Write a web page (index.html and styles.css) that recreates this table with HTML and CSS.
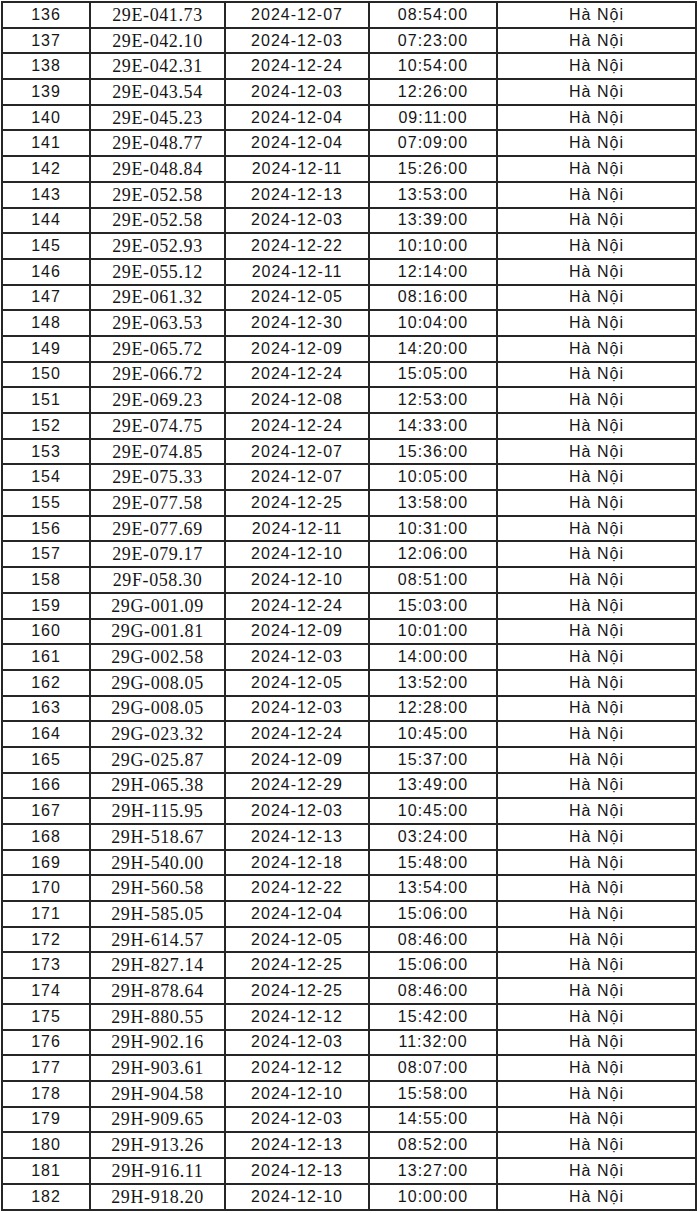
FILE: index.html
```html
<!DOCTYPE html>
<html lang="vi">
<head>
<meta charset="utf-8">
<title>Danh sách</title>
<link rel="stylesheet" href="styles.css">
</head>
<body>
<table class="list">
<colgroup><col class="c-no"><col class="c-plate"><col class="c-date"><col class="c-time"><col class="c-city"></colgroup>
<tbody>
<tr><td>136</td><td class="plate">29E-041.73</td><td>2024-12-07</td><td>08:54:00</td><td>Hà Nội</td></tr>
<tr><td>137</td><td class="plate">29E-042.10</td><td>2024-12-03</td><td>07:23:00</td><td>Hà Nội</td></tr>
<tr><td>138</td><td class="plate">29E-042.31</td><td>2024-12-24</td><td>10:54:00</td><td>Hà Nội</td></tr>
<tr><td>139</td><td class="plate">29E-043.54</td><td>2024-12-03</td><td>12:26:00</td><td>Hà Nội</td></tr>
<tr><td>140</td><td class="plate">29E-045.23</td><td>2024-12-04</td><td>09:11:00</td><td>Hà Nội</td></tr>
<tr><td>141</td><td class="plate">29E-048.77</td><td>2024-12-04</td><td>07:09:00</td><td>Hà Nội</td></tr>
<tr><td>142</td><td class="plate">29E-048.84</td><td>2024-12-11</td><td>15:26:00</td><td>Hà Nội</td></tr>
<tr><td>143</td><td class="plate">29E-052.58</td><td>2024-12-13</td><td>13:53:00</td><td>Hà Nội</td></tr>
<tr><td>144</td><td class="plate">29E-052.58</td><td>2024-12-03</td><td>13:39:00</td><td>Hà Nội</td></tr>
<tr><td>145</td><td class="plate">29E-052.93</td><td>2024-12-22</td><td>10:10:00</td><td>Hà Nội</td></tr>
<tr><td>146</td><td class="plate">29E-055.12</td><td>2024-12-11</td><td>12:14:00</td><td>Hà Nội</td></tr>
<tr><td>147</td><td class="plate">29E-061.32</td><td>2024-12-05</td><td>08:16:00</td><td>Hà Nội</td></tr>
<tr><td>148</td><td class="plate">29E-063.53</td><td>2024-12-30</td><td>10:04:00</td><td>Hà Nội</td></tr>
<tr><td>149</td><td class="plate">29E-065.72</td><td>2024-12-09</td><td>14:20:00</td><td>Hà Nội</td></tr>
<tr><td>150</td><td class="plate">29E-066.72</td><td>2024-12-24</td><td>15:05:00</td><td>Hà Nội</td></tr>
<tr><td>151</td><td class="plate">29E-069.23</td><td>2024-12-08</td><td>12:53:00</td><td>Hà Nội</td></tr>
<tr><td>152</td><td class="plate">29E-074.75</td><td>2024-12-24</td><td>14:33:00</td><td>Hà Nội</td></tr>
<tr><td>153</td><td class="plate">29E-074.85</td><td>2024-12-07</td><td>15:36:00</td><td>Hà Nội</td></tr>
<tr><td>154</td><td class="plate">29E-075.33</td><td>2024-12-07</td><td>10:05:00</td><td>Hà Nội</td></tr>
<tr><td>155</td><td class="plate">29E-077.58</td><td>2024-12-25</td><td>13:58:00</td><td>Hà Nội</td></tr>
<tr><td>156</td><td class="plate">29E-077.69</td><td>2024-12-11</td><td>10:31:00</td><td>Hà Nội</td></tr>
<tr><td>157</td><td class="plate">29E-079.17</td><td>2024-12-10</td><td>12:06:00</td><td>Hà Nội</td></tr>
<tr><td>158</td><td class="plate">29F-058.30</td><td>2024-12-10</td><td>08:51:00</td><td>Hà Nội</td></tr>
<tr><td>159</td><td class="plate">29G-001.09</td><td>2024-12-24</td><td>15:03:00</td><td>Hà Nội</td></tr>
<tr><td>160</td><td class="plate">29G-001.81</td><td>2024-12-09</td><td>10:01:00</td><td>Hà Nội</td></tr>
<tr><td>161</td><td class="plate">29G-002.58</td><td>2024-12-03</td><td>14:00:00</td><td>Hà Nội</td></tr>
<tr><td>162</td><td class="plate">29G-008.05</td><td>2024-12-05</td><td>13:52:00</td><td>Hà Nội</td></tr>
<tr><td>163</td><td class="plate">29G-008.05</td><td>2024-12-03</td><td>12:28:00</td><td>Hà Nội</td></tr>
<tr><td>164</td><td class="plate">29G-023.32</td><td>2024-12-24</td><td>10:45:00</td><td>Hà Nội</td></tr>
<tr><td>165</td><td class="plate">29G-025.87</td><td>2024-12-09</td><td>15:37:00</td><td>Hà Nội</td></tr>
<tr><td>166</td><td class="plate">29H-065.38</td><td>2024-12-29</td><td>13:49:00</td><td>Hà Nội</td></tr>
<tr><td>167</td><td class="plate">29H-115.95</td><td>2024-12-03</td><td>10:45:00</td><td>Hà Nội</td></tr>
<tr><td>168</td><td class="plate">29H-518.67</td><td>2024-12-13</td><td>03:24:00</td><td>Hà Nội</td></tr>
<tr><td>169</td><td class="plate">29H-540.00</td><td>2024-12-18</td><td>15:48:00</td><td>Hà Nội</td></tr>
<tr><td>170</td><td class="plate">29H-560.58</td><td>2024-12-22</td><td>13:54:00</td><td>Hà Nội</td></tr>
<tr><td>171</td><td class="plate">29H-585.05</td><td>2024-12-04</td><td>15:06:00</td><td>Hà Nội</td></tr>
<tr><td>172</td><td class="plate">29H-614.57</td><td>2024-12-05</td><td>08:46:00</td><td>Hà Nội</td></tr>
<tr><td>173</td><td class="plate">29H-827.14</td><td>2024-12-25</td><td>15:06:00</td><td>Hà Nội</td></tr>
<tr><td>174</td><td class="plate">29H-878.64</td><td>2024-12-25</td><td>08:46:00</td><td>Hà Nội</td></tr>
<tr><td>175</td><td class="plate">29H-880.55</td><td>2024-12-12</td><td>15:42:00</td><td>Hà Nội</td></tr>
<tr><td>176</td><td class="plate">29H-902.16</td><td>2024-12-03</td><td>11:32:00</td><td>Hà Nội</td></tr>
<tr><td>177</td><td class="plate">29H-903.61</td><td>2024-12-12</td><td>08:07:00</td><td>Hà Nội</td></tr>
<tr><td>178</td><td class="plate">29H-904.58</td><td>2024-12-10</td><td>15:58:00</td><td>Hà Nội</td></tr>
<tr><td>179</td><td class="plate">29H-909.65</td><td>2024-12-03</td><td>14:55:00</td><td>Hà Nội</td></tr>
<tr><td>180</td><td class="plate">29H-913.26</td><td>2024-12-13</td><td>08:52:00</td><td>Hà Nội</td></tr>
<tr><td>181</td><td class="plate">29H-916.11</td><td>2024-12-13</td><td>13:27:00</td><td>Hà Nội</td></tr>
<tr><td>182</td><td class="plate">29H-918.20</td><td>2024-12-10</td><td>10:00:00</td><td>Hà Nội</td></tr>
</tbody>
</table>
</body>
</html>
```
FILE: styles.css
```css
html, body {
  margin: 0;
  padding: 0;
  background: #ffffff;
}

body {
  padding: 1px 0 0 1px;
}

.list {
  width: 696px;
  height: 1210px;
  table-layout: fixed;
  border-collapse: separate;
  border-spacing: 2px;
  background: #262626;
  font-family: "Liberation Sans", Arial, sans-serif;
  font-size: 16px;
  color: #161616;
}

.c-no { width: 86px; }
.c-plate { width: 133px; }
.c-date { width: 142px; }
.c-time { width: 126px; }
.c-city { width: 197px; }

.list td {
  background: #ffffff;
  padding: 0;
  text-align: center;
  vertical-align: middle;
  line-height: 1;
  letter-spacing: 1px;
  white-space: nowrap;
}

.list td.plate {
  font-family: "Liberation Serif", "Times New Roman", serif;
  font-size: 18px;
  letter-spacing: 0.6px;
}
```
